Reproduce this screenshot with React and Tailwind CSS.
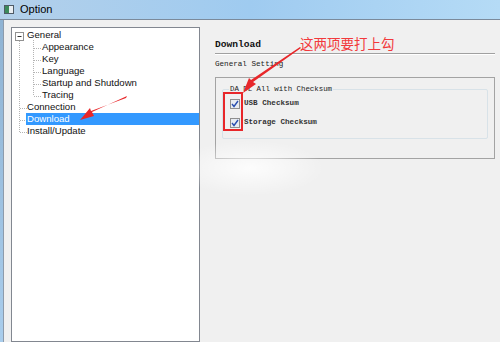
import React from 'react';

const treeItems = [
  { label: 'General', level: 0 },
  { label: 'Appearance', level: 1 },
  { label: 'Key', level: 1 },
  { label: 'Language', level: 1 },
  { label: 'Startup and Shutdown', level: 1 },
  { label: 'Tracing', level: 1 },
  { label: 'Connection', level: 0 },
  { label: 'Download', level: 0, selected: true },
  { label: 'Install/Update', level: 0 },
];

function TreeLines() {
  // dotted connector lines of the tree view
  return (
    <svg className="absolute left-0 top-0" width="60" height="120" fill="none">
      <g stroke="#b4b4b4" strokeDasharray="1 1">
        <line x1="7.5" y1="13" x2="7.5" y2="104" />
        <line x1="8" y1="80.5" x2="15" y2="80.5" />
        <line x1="8" y1="92.5" x2="15" y2="92.5" />
        <line x1="8" y1="104.5" x2="15" y2="104.5" />
        <line x1="21.5" y1="12" x2="21.5" y2="68" />
        <line x1="22" y1="20.5" x2="29" y2="20.5" />
        <line x1="22" y1="32.5" x2="29" y2="32.5" />
        <line x1="22" y1="44.5" x2="29" y2="44.5" />
        <line x1="22" y1="56.5" x2="29" y2="56.5" />
        <line x1="22" y1="68.5" x2="29" y2="68.5" />
      </g>
      <rect x="3.5" y="4.5" width="8" height="8" fill="white" stroke="#919191" />
      <line x1="5.5" y1="8.5" x2="9.5" y2="8.5" stroke="#333" />
    </svg>
  );
}

function Check({ label }) {
  return (
    <div className="flex items-center h-[19px]">
      <div className="w-[10px] h-[10px] border border-[#8f8f8f] bg-[#e8ecf2] flex items-center justify-center ml-[7px]">
        <svg width="8" height="8" viewBox="0 0 8 8">
          <path d="M1 4 L3 6.5 L7 1" stroke="#2a4fb0" strokeWidth="1.4" fill="none" />
        </svg>
      </div>
      <span className="ml-[4px] text-[7.6px] font-bold text-[#333]" style={{ fontFamily: '"Liberation Mono", monospace' }}>
        {label}
      </span>
    </div>
  );
}

export default function App() {
  return (
    <div className="relative w-[500px] h-[342px] overflow-hidden bg-[#f0f0f0] flex flex-col">
      {/* Title bar */}
      <div className="h-[20px] shrink-0 flex items-center bg-gradient-to-r from-[#b3d0ea] via-[#9fcbf0] to-[#b5dbf6] border-b border-[#7b8a9b]">
        <div className="ml-[4px] w-[10px] h-[9px] border border-[#4f5b66] bg-[#e9eef2] flex">
          <div className="w-[4px] bg-[#3c8a5a]" />
        </div>
        <span className="ml-[6px] text-[11px] text-black" style={{ fontFamily: '"Liberation Sans", sans-serif' }}>
          Option
        </span>
      </div>

      <div className="flex flex-1 min-h-0">
        {/* window frame */}
        <div className="w-[4px] bg-gradient-to-b from-[#8fb3d3] to-[#a9cdec] border-r border-[#8d9bab]" />

        {/* tree panel */}
        <div className="pl-[7px] pt-[7px] flex">
          <div className="relative w-[189px] h-full bg-white border border-[#828790] pt-[1px]">
            <TreeLines />
            {treeItems.map((it) => (
              <div key={it.label} className="relative h-[12px] flex items-center">
                <div
                  className={`h-[12px] flex items-center ${it.level === 1 ? 'ml-[29px]' : 'ml-[14px] flex-1'} ${
                    it.selected ? 'bg-[#3399ff] text-white' : 'text-[#111]'
                  }`}
                >
                  <span className="pl-[1px] text-[9.6px] leading-[12px]" style={{ fontFamily: '"Liberation Sans", sans-serif' }}>
                    {it.label}
                  </span>
                </div>
              </div>
            ))}
          </div>
        </div>

        {/* right content */}
        <div className="flex-1 pl-[15px] pr-[5px] pt-[18px]" style={{ fontFamily: '"Liberation Mono", monospace' }}>
          <div className="text-[9.6px] font-bold text-[#111] h-[14px] leading-[14px]">Download</div>
          <div className="h-[2px] border-t border-[#a0a0a0] bg-white mt-[1px]" />
          <div className="text-[7.6px] text-[#222] mt-[4px] h-[10px] leading-[10px]">General Setting</div>
          <div className="mt-[8px] h-[82px] border border-[#a3a3a3] pt-[11px] px-[6px]">
            <div className="relative h-[50px] border border-[#d8e2e8] rounded-[2px]">
              <span className="absolute left-[6px] -top-[6px] bg-[#f0f0f0] px-[1px] text-[7.4px] text-[#222] leading-[10px]">
                DA DL All with Checksum
              </span>
              <div className="pt-[4px]">
                <Check label="USB Checksum" />
                <Check label="Storage Checksum" />
              </div>
            </div>
          </div>
        </div>
      </div>

      {/* watermark glow */}
      <div className="absolute left-[175px] top-[140px] w-[150px] h-[56px] bg-[radial-gradient(ellipse_at_center,rgba(255,255,255,0.85),rgba(255,255,255,0)_70%)]" />

      {/* annotations */}
      <div className="absolute left-[223px] top-[92px] w-[20px] h-[39px] border-2 border-[#e8272a]" />
      <span
        className="absolute left-[300px] top-[34px] text-[13.5px] leading-[18px] text-[#f2393c]"
        style={{ fontFamily: '"Noto Sans CJK SC", sans-serif' }}
      >
        这两项要打上勾
      </span>
      <svg className="absolute left-0 top-0" width="500" height="342">
        <polygon points="127,96 92,112 94,116 80,120 90,108 91,111 126,98" fill="#e8272a" />
        <polygon points="301,48 253,82 256,84 243,93 249,78 251,80 300,47" fill="#e8272a" />
      </svg>
    </div>
  );
}
